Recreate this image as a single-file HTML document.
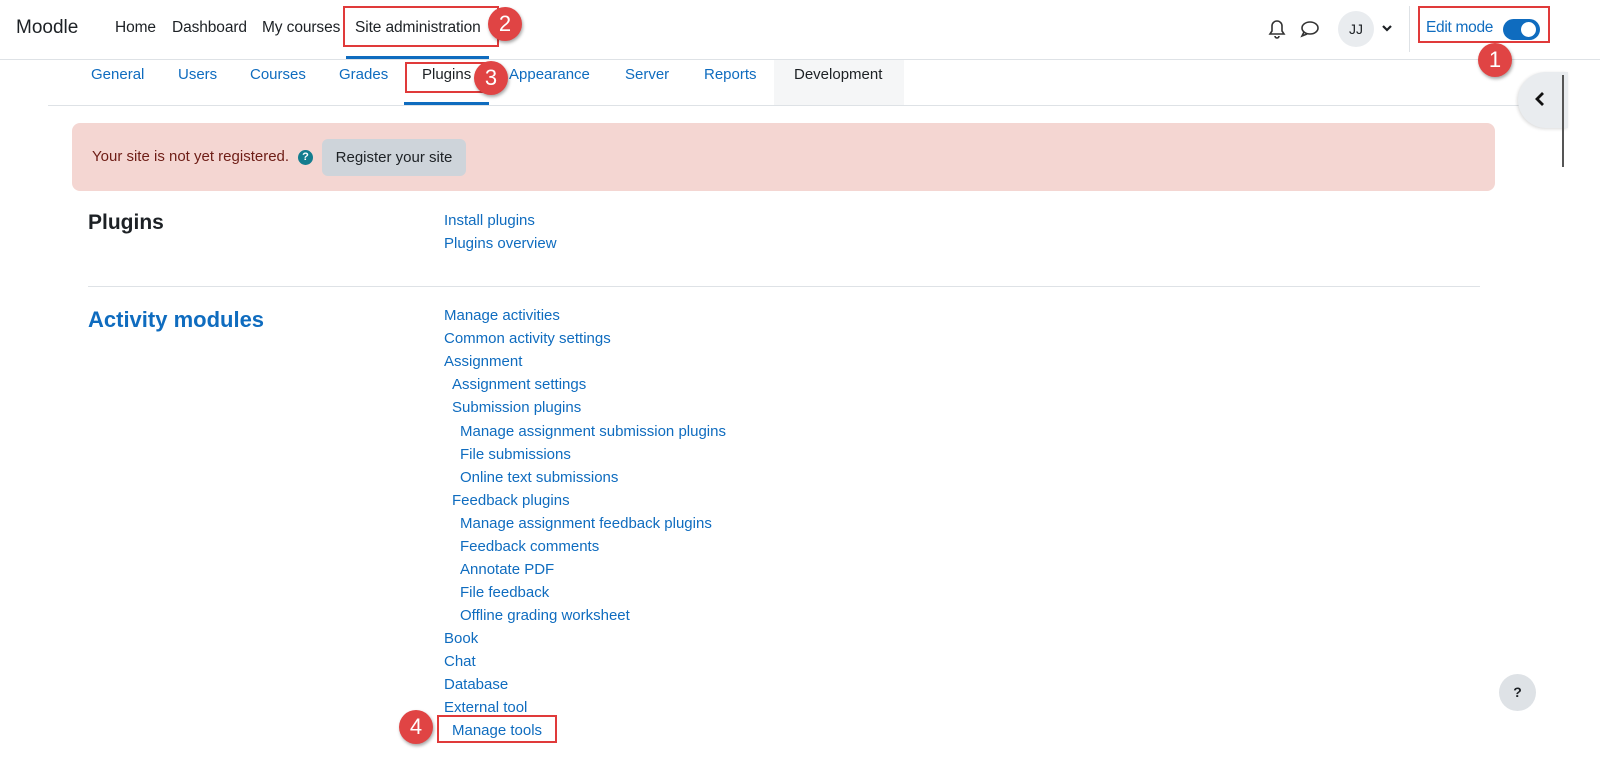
<!DOCTYPE html>
<html><head><meta charset="utf-8"><style>
*{box-sizing:border-box;margin:0;padding:0}
body{width:1600px;height:759px;overflow:hidden;background:#fff;font-family:"Liberation Sans",sans-serif;font-size:15px;color:#1d2125;position:relative}
.a{position:absolute;white-space:nowrap}
.l{color:#0f6cbf}
.nav{top:19px;font-size:15.5px;letter-spacing:-0.1px}
.tab{top:66px;color:#0f6cbf;font-size:15px}
.rb{position:absolute;border:2px solid #e03a3a}
.bd{position:absolute;width:34px;height:34px;border-radius:50%;background:#e04444;color:#fff;font-size:22px;text-align:center;line-height:34px;box-shadow:1px 2px 3px rgba(0,0,0,.35)}
</style></head><body>
<div class="a" style="left:16px;top:17px;font-size:19px">Moodle</div>
<div class="a nav" style="left:115px">Home</div>
<div class="a nav" style="left:172px">Dashboard</div>
<div class="a nav" style="left:262px">My courses</div>
<div class="a nav" style="left:355px">Site administration</div>
<div class="a" style="left:346px;top:56px;width:143px;height:3px;background:#0f6cbf"></div>
<div class="a" style="left:0;top:59px;width:1600px;height:1px;background:#dee2e6"></div>
<svg class="a" style="left:1268px;top:19px" width="18" height="20" viewBox="0 0 18 20"><path d="M9 2a5 5 0 0 0-5 5v5l-2 3h14l-2-3V7a5 5 0 0 0-5-5zM7 17a2 2 0 0 0 4 0" fill="none" stroke="#333" stroke-width="1.6"/></svg>
<svg class="a" style="left:1300px;top:20px" width="20" height="18" viewBox="0 0 20 18"><ellipse cx="10" cy="8" rx="8" ry="6" fill="none" stroke="#333" stroke-width="1.6"/><path d="M4 12l-2 4 5-2" fill="none" stroke="#333" stroke-width="1.6"/></svg>
<div class="a" style="left:1338px;top:11px;width:36px;height:36px;border-radius:50%;background:#e9ecef;text-align:center;line-height:36px;font-size:14px">JJ</div>
<svg class="a" style="left:1382px;top:25px" width="10" height="8" viewBox="0 0 10 8"><path d="M1 1l4 4 4-4" fill="none" stroke="#1d2125" stroke-width="2.2"/></svg>
<div class="a" style="left:1409px;top:6px;width:1px;height:46px;background:#dee2e6"></div>
<div class="a l" style="left:1426px;top:19px;font-size:15.5px;letter-spacing:-0.3px">Edit mode</div>
<div class="a" style="left:1503px;top:19px;width:37px;height:21px;border-radius:11px;background:#0f6cbf"></div>
<div class="a" style="left:1521px;top:22px;width:15px;height:15px;border-radius:50%;background:#fff"></div>
<div class="a" style="left:774px;top:60px;width:130px;height:45px;background:#f5f6f7"></div>
<div class="a tab" style="left:91px">General</div>
<div class="a tab" style="left:178px">Users</div>
<div class="a tab" style="left:250px">Courses</div>
<div class="a tab" style="left:339px">Grades</div>
<div class="a tab" style="left:422px;color:#1d2125">Plugins</div>
<div class="a tab" style="left:509px">Appearance</div>
<div class="a tab" style="left:625px">Server</div>
<div class="a tab" style="left:704px">Reports</div>
<div class="a tab" style="left:794px;color:#1d2125">Development</div>
<div class="a" style="left:404px;top:102px;width:85px;height:3px;background:#0f6cbf"></div>
<div class="a" style="left:48px;top:105px;width:1472px;height:1px;background:#dee2e6"></div>
<div class="a" style="left:1518px;top:72px;width:50px;height:56px;border-radius:28px 0 0 28px;background:#e9ecef;box-shadow:-1px 1px 3px rgba(0,0,0,.15)"></div>
<svg class="a" style="left:1534px;top:91px" width="12" height="16" viewBox="0 0 12 16"><path d="M9 2L3 8l6 6" fill="none" stroke="#111" stroke-width="2.8"/></svg>
<div class="a" style="left:1562px;top:75px;width:2px;height:92px;background:#555"></div>
<div class="a" style="left:72px;top:123px;width:1423px;height:68px;border-radius:8px;background:#f4d6d2"></div>
<div class="a" style="left:92px;top:148px;color:#6e1d16">Your site is not yet registered.</div>
<div class="a" style="left:298px;top:150px;width:15px;height:15px;border-radius:50%;background:#147d8f;color:#fff;font-size:11px;font-weight:bold;text-align:center;line-height:15px">?</div>
<div class="a" style="left:322px;top:139px;width:144px;height:37px;border-radius:6px;background:#ced4da;text-align:center;line-height:37px">Register your site</div>
<div class="a" style="left:88px;top:211px;font-size:21px;font-weight:bold">Plugins</div>
<div class="a l" style="left:444px;top:212px">Install plugins</div>
<div class="a l" style="left:444px;top:235px">Plugins overview</div>
<div class="a" style="left:88px;top:286px;width:1392px;height:1px;background:#dee2e6"></div>
<div class="a" style="left:88px;top:307px;font-size:22px;font-weight:bold;color:#0f6cbf">Activity modules</div>
<div class="a l" style="left:444px;top:307px">Manage activities</div>
<div class="a l" style="left:444px;top:330px">Common activity settings</div>
<div class="a l" style="left:444px;top:353px">Assignment</div>
<div class="a l" style="left:452px;top:376px">Assignment settings</div>
<div class="a l" style="left:452px;top:399px">Submission plugins</div>
<div class="a l" style="left:460px;top:423px">Manage assignment submission plugins</div>
<div class="a l" style="left:460px;top:446px">File submissions</div>
<div class="a l" style="left:460px;top:469px">Online text submissions</div>
<div class="a l" style="left:452px;top:492px">Feedback plugins</div>
<div class="a l" style="left:460px;top:515px">Manage assignment feedback plugins</div>
<div class="a l" style="left:460px;top:538px">Feedback comments</div>
<div class="a l" style="left:460px;top:561px">Annotate PDF</div>
<div class="a l" style="left:460px;top:584px">File feedback</div>
<div class="a l" style="left:460px;top:607px">Offline grading worksheet</div>
<div class="a l" style="left:444px;top:630px">Book</div>
<div class="a l" style="left:444px;top:653px">Chat</div>
<div class="a l" style="left:444px;top:676px">Database</div>
<div class="a l" style="left:444px;top:699px">External tool</div>
<div class="a l" style="left:452px;top:722px">Manage tools</div>
<div class="a" style="left:1499px;top:674px;width:37px;height:37px;border-radius:50%;background:#dee2e6;text-align:center;line-height:37px;font-weight:bold;font-size:14px">?</div>
<div class="rb" style="left:343px;top:6px;width:156px;height:41px"></div>
<div class="bd" style="left:488px;top:7px">2</div>
<div class="rb" style="left:405px;top:62px;width:83px;height:31px"></div>
<div class="bd" style="left:474px;top:61px">3</div>
<div class="rb" style="left:1418px;top:6px;width:132px;height:37px"></div>
<div class="bd" style="left:1478px;top:43px">1</div>
<div class="rb" style="left:437px;top:715px;width:120px;height:28px"></div>
<div class="bd" style="left:399px;top:710px">4</div>
</body></html>
